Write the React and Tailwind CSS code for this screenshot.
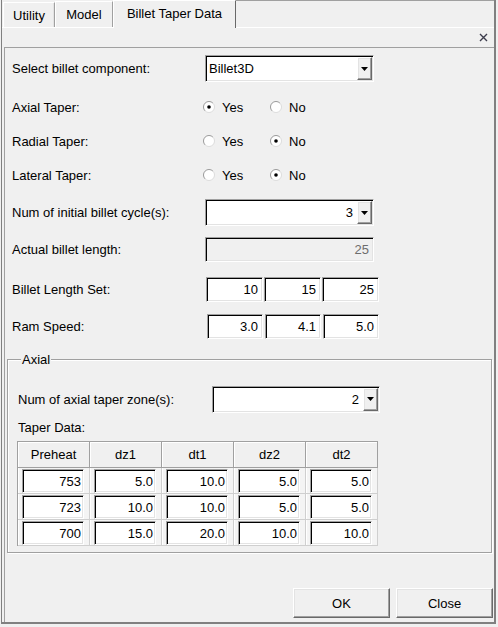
import React from 'react'

const sunken = "border border-t-[#a0a0a0] border-l-[#a0a0a0] border-r-white border-b-white shadow-[inset_1px_1px_0_#000,inset_-1px_-1px_0_#e3e3e3]"
const raised = "border border-t-white border-l-white border-r-[#696969] border-b-[#696969] shadow-[inset_-1px_-1px_0_#a0a0a0,inset_1px_1px_0_#e3e3e3]"

function Arrow() {
  return (
    <svg width="7" height="4" viewBox="0 0 7 4"><polygon points="0,0 7,0 3.5,4" fill="#000" /></svg>
  )
}

function Combo({ value, align = 'right', w = 'w-[169px]' }) {
  return (
    <div className={`${w} h-[27px] bg-white flex ${sunken} p-[1px]`}>
      <div className={`flex-1 flex items-center ${align === 'left' ? 'justify-start pl-[2px]' : 'justify-end pr-[4px]'}`}>{value}</div>
      <div className={`w-[15px] h-full bg-[#f0f0f0] flex items-center justify-center ${raised}`}><Arrow /></div>
    </div>
  )
}

function Radio({ checked, label }) {
  return (
    <div className="w-[67px] flex items-center gap-[7px]">
      <svg width="12" height="12" viewBox="0 0 12 12">
        <circle cx="6" cy="6" r="5.5" fill="#fff" />
        <path d="M2.1 9.9 A5.5 5.5 0 0 1 9.9 2.1" stroke="#9a9a9a" fill="none" />
        <path d="M9.9 2.1 A5.5 5.5 0 0 1 2.1 9.9" stroke="#dcdcdc" fill="none" />
        {checked && <circle cx="6" cy="6" r="1.8" fill="#000" />}
      </svg>
      <span>{label}</span>
    </div>
  )
}

function Box({ value, w = 'w-[57px]', disabled }) {
  return (
    <div className={`${w} h-[25px] flex items-center justify-end pr-[4px] ${sunken} ${disabled ? 'bg-[#f0f0f0] text-[#6d6d6d]' : 'bg-white'}`}>{value}</div>
  )
}

const rows = [
  ['753', '5.0', '10.0', '5.0', '5.0'],
  ['723', '10.0', '10.0', '5.0', '5.0'],
  ['700', '15.0', '20.0', '10.0', '10.0'],
]

export default function App() {
  return (
    <div className="w-[498px] h-[627px] bg-[#f0f0f0] pl-[1px] text-[13px] text-black font-['Liberation_Sans',Arial,sans-serif] leading-none">
      <div className="w-[495px] h-[624px] border-l border-r-2 border-b-2 border-[#808080] flex flex-col">
        {/* tabs */}
        <div className="h-[27px] flex items-end pl-[1px]">
          <div className="w-[52px] h-[25px] flex items-center justify-center border-t border-l border-white border-r border-r-[#a0a0a0] shadow-[inset_-1px_0_0_#e3e3e3]">Utility</div>
          <div className="w-[58px] h-[26px] flex items-center justify-center border-t border-l border-white border-r border-r-[#a0a0a0]">Model</div>
          <div className="w-[123px] h-[28px] -mb-[1px] bg-[#f0f0f0] flex items-center justify-center border-t border-l border-white border-r border-r-[#696969] relative z-10 pb-[2px]">Billet Taper Data</div>
          <div className="flex-1 h-full border-t border-[#a0a0a0]" />
        </div>
        <div className="flex-1 flex flex-col border-t border-white">
          <div className="h-[19px] flex items-center justify-end pr-[6px]">
            <svg width="9" height="9" viewBox="0 0 9 9"><path d="M1 1 L8 8 M8 1 L1 8" stroke="#3c3c4c" strokeWidth="1.4" /></svg>
          </div>
          <div className="flex-1 ml-[2px] border-t border-l border-[#a0a0a0] flex flex-col">
            <div className="mt-[7px] h-[27px] flex items-center">
              <div className="w-[200px] pl-[7px]">Select billet component:</div>
              <Combo value="Billet3D" align="left" />
            </div>
            {[['Axial Taper:', true], ['Radial Taper:', false], ['Lateral Taper:', false]].map(([l, yes], i) => (
              <div key={l} className={`${i === 0 ? 'mt-[8px]' : ''} h-[34px] flex items-center`}>
                <div className="w-[198px] pl-[7px]">{l}</div>
                <Radio checked={yes} label="Yes" />
                <Radio checked={!yes} label="No" />
              </div>
            ))}
            <div className="mt-[7px] h-[27px] flex items-center">
              <div className="w-[200px] pl-[7px]">Num of initial billet cycle(s):</div>
              <Combo value="3" />
            </div>
            <div className="mt-[11px] h-[25px] flex items-center">
              <div className="w-[200px] pl-[7px]">Actual billet length:</div>
              <Box value="25" w="w-[169px]" disabled />
            </div>
            <div className="mt-[15px] h-[25px] flex items-center">
              <div className="w-[201px] pl-[7px]">Billet Length Set:</div>
              <div className="flex gap-[1px]">
                <Box value="10" /><Box value="15" /><Box value="25" />
              </div>
            </div>
            <div className="mt-[12px] h-[25px] flex items-center">
              <div className="w-[202px] pl-[7px]">Ram Speed:</div>
              <div className="flex gap-[2px]">
                <Box value="3.0" w="w-[56px]" /><Box value="4.1" w="w-[56px]" /><Box value="5.0" w="w-[56px]" />
              </div>
            </div>

            {/* Axial group */}
            <div className="mt-[20px] ml-[2px] mr-[2px] relative border border-[#a0a0a0] shadow-[inset_1px_1px_0_#fff,1px_1px_0_#fff] pb-[6px]">
              <span className="absolute -top-[8px] left-[13px] px-[1px] bg-[#f0f0f0] leading-[15px]">Axial</span>
              <div className="mt-[26px] h-[26px] flex items-center">
                <div className="w-[204px] pl-[10px]">Num of axial taper zone(s):</div>
                <Combo value="2" w="w-[168px]" />
              </div>
              <div className="mt-[8px] h-[15px] flex items-center pl-[10px]">Taper Data:</div>
              <div className="mt-[6px] ml-[9px] w-[361px] border-l border-t border-[#a0a0a0] bg-[#f4f4f4]">
                <div className="flex">
                  {['Preheat', 'dz1', 'dt1', 'dz2', 'dt2'].map(h => (
                    <div key={h} className="w-[72px] h-[26px] flex items-center justify-center border-r border-b border-[#a0a0a0] shadow-[inset_1px_1px_0_#fff] bg-[#f0f0f0]">{h}</div>
                  ))}
                </div>
                {rows.map((r, i) => (
                  <div key={i} className="flex">
                    {r.map((v, j) => (
                      <div key={j} className="w-[72px] h-[26px] pl-[4px] pr-[5px] pt-[1px] border-r border-b border-[#cfcfcf] shadow-[inset_1px_0_0_#fff]">
                        <div className={`h-[24px] bg-white flex items-center justify-end pr-[2px] ${sunken}`}>{v}</div>
                      </div>
                    ))}
                  </div>
                ))}
              </div>
            </div>

            <div className="mt-[35px] flex justify-end gap-[6px] pr-[1px]">
              <button className={`w-[97px] h-[30px] bg-[#f0f0f0] ${raised}`}>OK</button>
              <button className={`w-[97px] h-[30px] bg-[#f0f0f0] ${raised}`}>Close</button>
            </div>
          </div>
        </div>
      </div>
    </div>
  )
}
